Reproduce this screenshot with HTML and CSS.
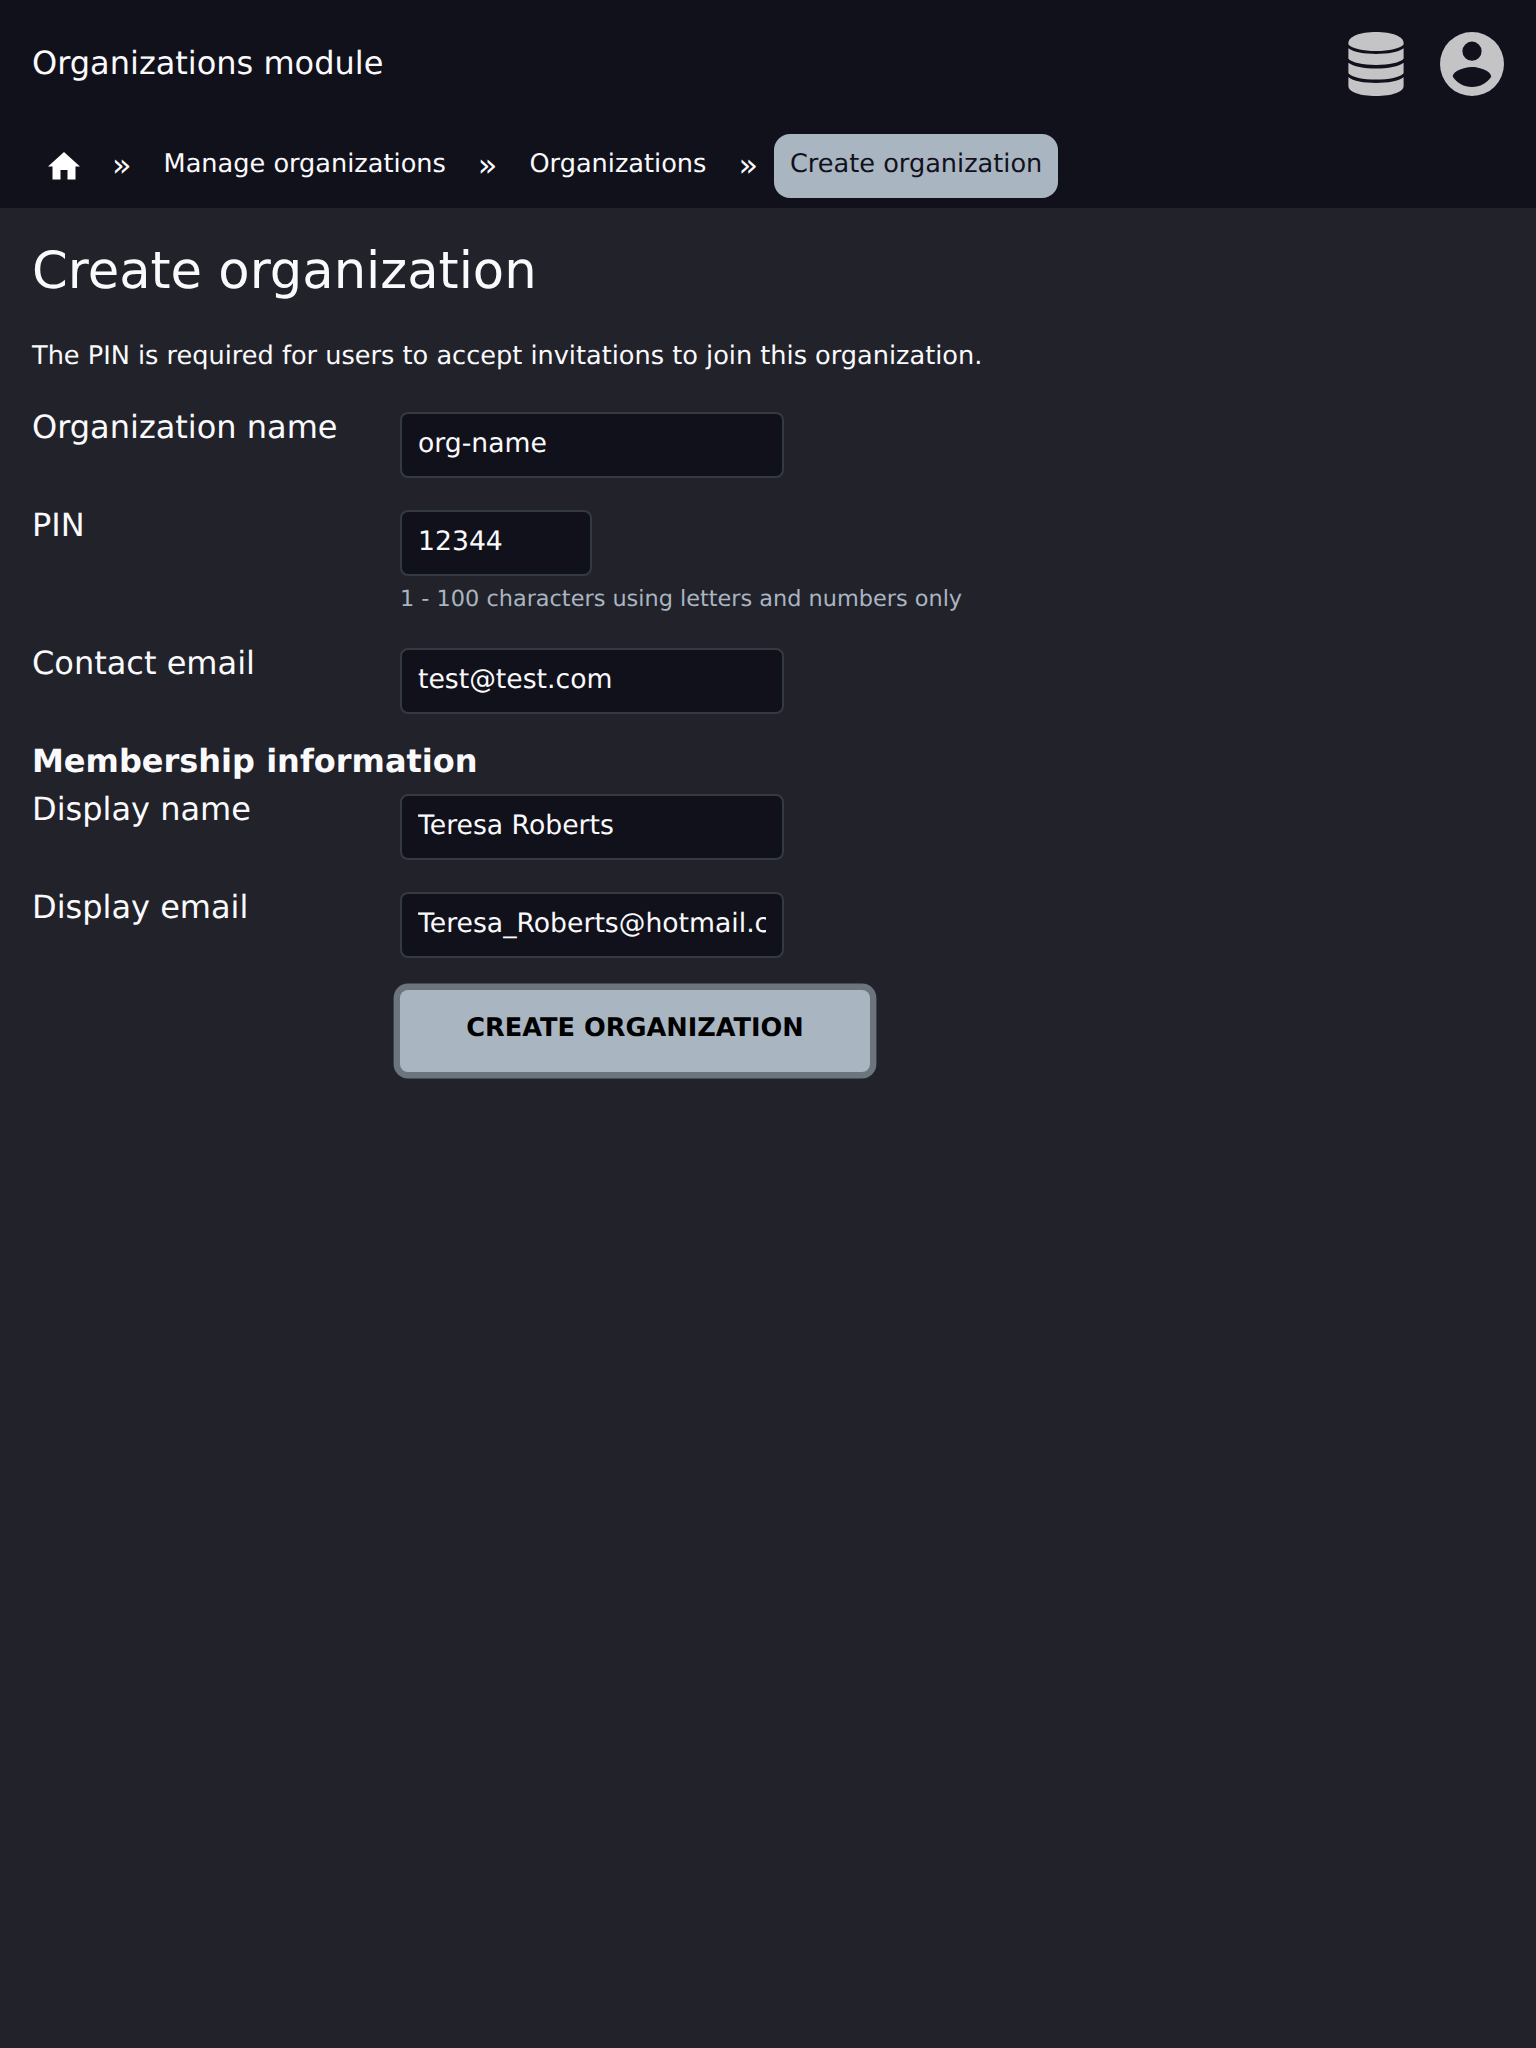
FILE: index.html
```html
<!DOCTYPE html>
<html lang="en">
<head>
<meta charset="utf-8">
<title>Create organization</title>
<link rel="stylesheet" href="styles.css">
</head>
<body>
<header class="header">
  <div class="topbar">
    <span class="module">Organizations module</span>
    <div class="actions">
      <svg class="icon-db" viewBox="0 0 56 64" fill="currentColor">
        <path d="M.4 11C.4 4.500 12 0 28 0s27.600 4.500 27.600 11v1.500C52 16.500 41 19 28 19S4 16.500 .4 12.500z"/>
        <path d="M.4 16.300C5 20 16 22 28 22s23-2 27.600-5.700v10.500C52 30.700 41 33 28 33S4 30.700 .4 26.800z"/>
        <path d="M.4 30.700C5 34.500 16 36.500 28 36.500s23-2 27.600-5.800v10.500C52 45.300 41 47.600 28 47.600S4 45.300 .4 41.200z"/>
        <path d="M.4 45.300C5 49 16 51 28 51s23-2 27.600-5.700V54c0 6-11.600 10-27.600 10S.4 60 .4 54z"/>
      </svg>
      <svg class="icon-user" viewBox="0 0 64 64" fill="currentColor">
        <path fill-rule="evenodd" d="M32 0a32 32 0 1 0 0 64a32 32 0 1 0 0-64zM32 9.600a9.600 9.600 0 1 1 0 19.200a9.600 9.600 0 1 1 0-19.200zM32 55c-8 0-15-4-19.200-10.300C12.900 38.400 25.600 35 32 35s19.100 3.400 19.200 9.700C47 51 40 55 32 55z"/>
      </svg>
    </div>
  </div>
  <nav class="crumbs">
    <a class="crumb crumb-home"><svg class="icon-home" viewBox="0 0 32 28" fill="currentColor"><path d="M16 0 32 14.500H27.500V27.500H19.500V18H12.500V27.500H4.500V14.500H0z"/></svg></a>
    <span class="sep">»</span>
    <a class="crumb">Manage organizations</a>
    <span class="sep">»</span>
    <a class="crumb">Organizations</a>
    <span class="sep">»</span>
    <a class="crumb current">Create organization</a>
  </nav>
</header>
<main class="content">
  <h1 class="title">Create organization</h1>
  <p class="intro">The PIN is required for users to accept invitations to join this organization.</p>
  <form class="form">
    <div class="row"><label class="label" for="name">Organization name</label><input class="input" id="name" value="org-name"></div>
    <div class="row"><label class="label" for="pin">PIN</label><div class="field"><input class="input short" id="pin" value="12344"><span class="hint">1 - 100 characters using letters and numbers only</span></div></div>
    <div class="row"><label class="label" for="contact">Contact email</label><input class="input" id="contact" value="test@test.com"></div>
    <h2 class="section">Membership information</h2>
    <div class="row"><label class="label" for="dname">Display name</label><input class="input" id="dname" value="Teresa Roberts"></div>
    <div class="row"><label class="label" for="demail">Display email</label><input class="input" id="demail" value="Teresa_Roberts@hotmail.com"></div>
    <button class="submit" type="button">CREATE ORGANIZATION</button>
  </form>
</main>
</body>
</html>
```
FILE: styles.css
```css
* { box-sizing: border-box; }
body {
  margin: 0;
  min-height: 2048px;
  background: #22222b;
  color: #fafafc;
  font-family: "DejaVu Sans", sans-serif;
  font-size: 25.6px;
  text-rendering: geometricPrecision;
}
.header { height: 208px; background: #11111b; }
.topbar {
  display: flex;
  align-items: center;
  justify-content: space-between;
  height: 128px;
  padding: 0 32px;
}
.module { font-size: 32px; line-height: 38px; padding-bottom: 3px; }
.actions { display: flex; gap: 36px; color: #c4c4c6; }
.icon-db { width: 56px; height: 64px; }
.icon-user { width: 64px; height: 64px; }
.crumbs { display: flex; height: 70px; padding: 6px 32px 0; }
.crumb { height: 64px; padding: 15px 16px 0; line-height: 30px; border-radius: 16px; white-space: nowrap; }
.crumb-home { padding-top: 18px; line-height: 0; color: #fff; }
.icon-home { width: 32px; height: 28px; }
.sep { margin: 0 16px; padding-top: 12px; font-size: 32px; line-height: 38px; }
.current { background: #a9b5c1; color: #11111b; }
.content { padding: 33px 32px 0; }
.title { margin: 0; font-size: 51.2px; font-weight: 400; line-height: 60px; }
.intro { margin: 40px 0 0; line-height: 30px; }
.form { display: flex; flex-direction: column; margin-top: 41px; }
.row { display: flex; align-items: flex-start; margin-bottom: 32px; }
.label { width: 368px; font-size: 32px; line-height: 38px; margin-top: -4px; }
.field { display: flex; flex-direction: column; }
.input {
  width: 384px;
  height: 66px;
  padding: 0 16px 4px;
  border: 2px solid #343a42;
  border-radius: 8px;
  background: #11111b;
  color: #fafafc;
  font: 26.67px "DejaVu Sans", sans-serif;
  text-rendering: geometricPrecision;
}
.short { width: 192px; }
.hint { margin-top: 10px; font-size: 22.4px; line-height: 26px; height: 30px; color: #a9b5c1; }
.section { margin: -4px 0 14px; font-size: 32px; line-height: 38px; }
.submit {
  align-self: flex-start;
  width: 470px;
  height: 82px;
  margin-left: 368px;
  padding: 0 0 6px;
  border: 0;
  border-radius: 8px;
  background: #a9b5c1;
  box-shadow: 0 0 0 6.4px #6c757d;
  color: #000;
  font: bold 25.6px "DejaVu Sans", sans-serif;
  text-rendering: geometricPrecision;
}
```
